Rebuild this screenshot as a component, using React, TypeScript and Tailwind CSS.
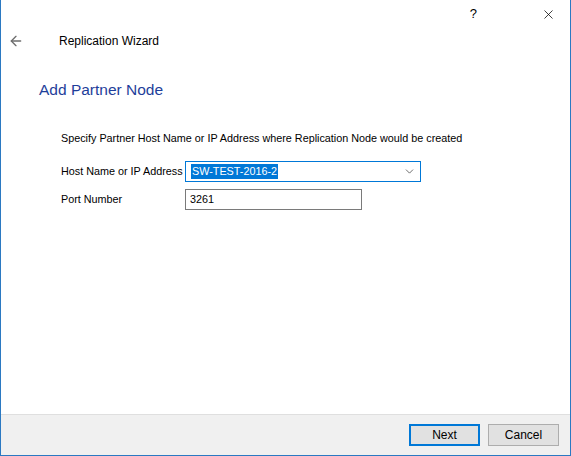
import { ArrowLeft, ChevronDown, X } from 'lucide-react'

export default function App() {
    return (
        <div
            className="w-[571px] h-[456px] bg-white border-l border-r border-b border-[#2b79c2] flex flex-col text-[10.8px] text-black whitespace-nowrap"
            style={{ fontFamily: '"Liberation Sans", Arial, sans-serif' }}
        >
            {/* title bar */}
            <div className="h-[29px] flex items-center justify-end pr-[14px]">
                <span className="text-[13px] mr-[64px] mt-[-2px]">?</span>
                <X className="w-[15px] h-[15px]" strokeWidth={1.2} />
            </div>

            {/* header */}
            <div className="h-[24px] flex items-center pl-[7px] text-[12px]">
                <ArrowLeft className="w-[16px] h-[16px] text-[#6e6e6e]" strokeWidth={2} />
                <span className="ml-[35px]">Replication Wizard</span>
            </div>

            <div className="flex-1 flex flex-col">
                <div className="pl-[38px] pt-[26px] text-[15.5px] text-[#1e3e9a] leading-[22px]">Add Partner Node</div>

                <div className="pl-[60px] pt-[29px] leading-[16px]">
                    Specify Partner Host Name or IP Address where Replication Node would be created
                </div>

                <div className="pl-[60px] pt-[15px] flex flex-col gap-[7px]">
                    <div className="flex items-center">
                        <span className="w-[124px] shrink-0">Host Name or IP Address</span>
                        <div className="w-[236px] h-[21px] border border-[#0078d7] flex items-center pl-[5px] pr-[4px]">
                            <span className="bg-[#0078d7] text-white leading-[15px] px-[1px]">SW-TEST-2016-2</span>
                            <div className="flex-1" />
                            <ChevronDown className="w-[13px] h-[13px] text-[#333]" strokeWidth={1.3} />
                        </div>
                    </div>
                    <div className="flex items-center">
                        <span className="w-[124px] shrink-0">Port Number</span>
                        <div className="w-[177px] h-[21px] border border-[#7a7a7a] flex items-center pl-[4px]">
                            3261
                        </div>
                    </div>
                </div>
            </div>

            {/* footer */}
            <div className="h-[41px] bg-[#f0f0f0] border-t border-[#dfdfdf] flex items-center justify-end gap-[8px] pr-[11px] text-[12px]">
                <button className="w-[71px] h-[22px] bg-[#e1e1e1] border-2 border-[#0078d7] flex items-center justify-center">
                    Next
                </button>
                <button className="w-[71px] h-[22px] bg-[#e1e1e1] border border-[#adadad] flex items-center justify-center">
                    Cancel
                </button>
            </div>
        </div>
    )
}
